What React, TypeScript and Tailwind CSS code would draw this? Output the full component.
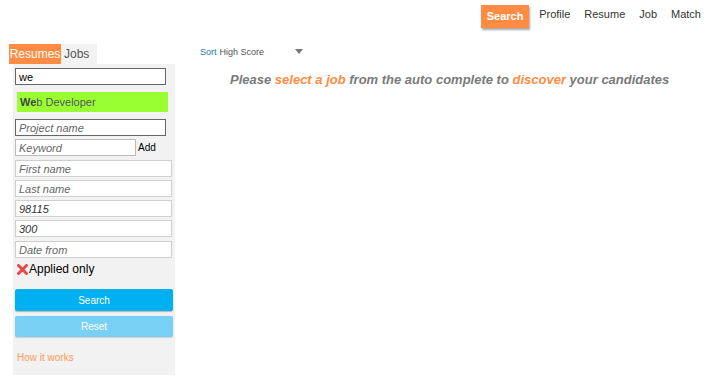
import { useState } from "react";

const font = { fontFamily: '"Liberation Sans", Arial, sans-serif' };

const Field = ({ placeholder, value, className = "" }: { placeholder: string; value?: string; className?: string }) => (
  <input
    defaultValue={value}
    placeholder={placeholder}
    className={
      "h-[17px] border border-[#cfcfcf] bg-white px-[3px] text-[11px] italic text-[#333] placeholder:text-[#666] outline-none " +
      className
    }
  />
);

const App = () => {
  const [tab] = useState("resumes");
  return (
    <div className="w-[709px] h-[385px] bg-white text-[#333] overflow-hidden" style={font}>
      {/* top nav */}
      <div className="flex justify-end items-start pt-[5px] pr-[8px] h-[44px]">
        <button className="w-[48px] h-[23px] bg-[#ff8c42] text-white text-[11px] font-bold shadow-[1px_2px_2px_rgba(0,0,0,0.35)]">
          Search
        </button>
        <div className="flex text-[11px] text-[#333] mt-[1px] ml-[3px]">
          <span className="px-[7px]">Profile</span>
          <span className="px-[7px]">Resume</span>
          <span className="px-[7px]">Job</span>
          <span className="pl-[7px]">Match</span>
        </div>
      </div>

      <div className="flex">
        {/* sidebar */}
        <div className="w-[175px] shrink-0">
          <div className="flex ml-[9px] h-[20px] text-[12px]">
            <span
              className={
                "w-[52px] flex items-center justify-center " +
                (tab === "resumes" ? "bg-[#ff8c42] text-white" : "")
              }
            >
              Resumes
            </span>
            <span className="w-[36px] pl-[3px] flex items-center bg-[#f2f2f2] text-[#555]">Jobs</span>
          </div>
          <div className="ml-[13px] w-[162px] h-[311px] bg-[#f2f2f2] pl-[2px] pt-[4px] flex flex-col">
            <input
              defaultValue="we"
              className="w-[151px] h-[17px] border border-[#666] bg-white px-[3px] text-[11px] text-black outline-none"
            />
            <div className="ml-[2px] mt-[7px] w-[151px] h-[20px] bg-[#99ff33] text-[11px] text-[#555] flex items-center pl-[3px]">
              <b className="text-[#444]">We</b>b Developer
            </div>
            <Field placeholder="Project name" className="mt-[7px] w-[151px] !border-[#666]" />
            <div className="flex items-center mt-[3px]">
              <Field placeholder="Keyword" className="w-[121px] !border-[#bbb]" />
              <span className="ml-[2px] text-[10px] text-black">Add</span>
            </div>
            <Field placeholder="First name" className="mt-[4px] w-[157px]" />
            <Field placeholder="Last name" className="mt-[3px] w-[157px]" />
            <Field placeholder="" value="98115" className="mt-[3px] w-[157px]" />
            <Field placeholder="" value="300" className="mt-[3px] w-[157px]" />
            <Field placeholder="Date from" className="mt-[4px] w-[157px]" />
            <div className="flex items-center mt-[2px] ml-[2px] text-[12px] text-black">
              <svg width="11" height="11" viewBox="0 0 11 11" className="mr-[1px]">
                <path d="M1.5 1.5 L9.5 9.5 M9.5 1.5 L1.5 9.5" stroke="#e8474a" strokeWidth="3" strokeLinecap="round" />
              </svg>
              Applied only
            </div>
            <button className="mt-[11px] w-[158px] h-[22px] rounded-[2px] bg-[#00b0f0] text-white text-[10px] shadow-[0_1px_1px_rgba(0,0,0,0.25)]">
              Search
            </button>
            <button className="mt-[5px] w-[158px] h-[21px] rounded-[2px] bg-[#78d0f4] text-white text-[10px] shadow-[0_1px_1px_rgba(0,0,0,0.15)]">
              Reset
            </button>
            <span className="mt-[13px] ml-[2px] text-[10px] text-[#ff9a5a]">How it works</span>
          </div>
        </div>

        {/* main */}
        <div className="flex-1 flex flex-col">
          <div className="flex items-center mt-[2px] ml-[25px] text-[9px]">
            <span className="text-[#1a75bc]">Sort</span>
            <span className="ml-[3px] text-[#555]">High Score</span>
            <svg width="8" height="5" viewBox="0 0 8 5" className="ml-[31px] -mt-[3px]">
              <path d="M0 0 L8 0 L4 5 Z" fill="#777" />
            </svg>
          </div>
          <p className="mt-[10px] ml-[55px] text-[13px] font-bold italic text-[#7a7a7a]">
            Please <span className="text-[#ff8c42]">select a job</span> from the auto complete to{" "}
            <span className="text-[#ff8c42]">discover</span> your candidates
          </p>
        </div>
      </div>
    </div>
  );
};

export default App;
